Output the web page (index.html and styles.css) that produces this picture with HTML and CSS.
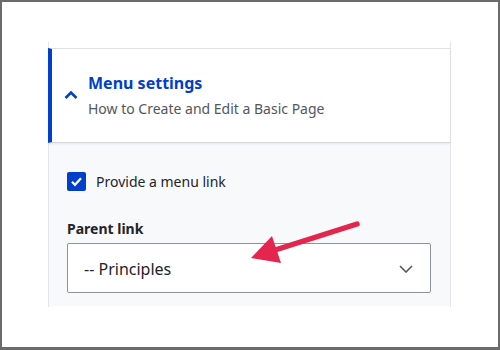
FILE: index.html
```html
<!DOCTYPE html>
<html>

<head>
	<link rel="stylesheet" href="styles.css">
</head>
<body>
<div class="frame">
	<div class="wrap">
		<div class="head">
			<svg class="toggle" width="14" height="9" viewBox="0 0 14 9">
				<polyline points="1.5,8 7,2.5 12.5,8" fill="none" stroke="#003ecc" stroke-width="2.6" />
			</svg>
			<div class="head-text">
				<div class="title">Menu settings</div>
				<div class="summary">How to Create and Edit a Basic Page</div>
			</div>
		</div>
		<div class="body">
			<div class="check-row">
				<span class="checkbox">
					<svg width="19" height="19" viewBox="0 0 19 19">
						<polyline points="5,9.8 8,12.8 14,6.3" fill="none" stroke="#fff" stroke-width="2.2" />
					</svg>
				</span>
				<span class="check-label">Provide a menu link</span>
			</div>
			<div class="field-label">Parent link</div>
			<div class="select">
				<span>-- Principles</span>
				<svg width="14" height="8" viewBox="0 0 14 8">
					<polyline points="1,1 7,7 13,1" fill="none" stroke="#55565b" stroke-width="1.6" />
				</svg>
			</div>
		</div>
	</div>
	<svg class="arrow" width="500" height="350" viewBox="0 0 500 350">
		<line x1="357" y1="224" x2="272" y2="251" stroke="#e3264d" stroke-width="5.5" stroke-linecap="round" />
		<polygon points="251,258 272,236 281,263" fill="#e3264d" />
	</svg>
</div>
</body>

</html>
```

FILE: styles.css
```css
	body {
		margin: 0;
		font-family: "Noto Sans", "Open Sans", sans-serif;
		background: #fff;
	}

	.frame {
		position: relative;
		width: 500px;
		height: 350px;
		box-sizing: border-box;
		border: 2px solid #6b6b6b;
		border-bottom-width: 3px;
		padding: 40px 0 0 46px;
		background: #fff;
	}

	.wrap {
		width: 403px;
		height: 265px;
		box-sizing: border-box;
		border-left: 1px solid #e4e5ea;
		border-right: 1px solid #e4e5ea;
		padding-top: 6px;
	}

	.head {
		display: flex;
		align-items: center;
		height: 95px;
		box-sizing: border-box;
		margin-left: -1px;
		border-top: 1px solid #e0e1e6;
		border-left: 4px solid #003ecc;
		border-bottom: 1px solid #d6d7dc;
		box-shadow: 0 1px 2px rgba(0, 0, 0, 0.08);
		padding-left: 12px;
		background: #fff;
		position: relative;
	}

	.toggle {
		margin-right: 10px;
		margin-top: -2px;
	}

	.title {
		font-size: 16px;
		line-height: 22px;
		font-weight: bold;
		color: #003ecc;
	}

	.summary {
		font-size: 14px;
		line-height: 20px;
		color: #55565b;
		margin-top: 5px;
	}

	.body {
		background: #f8f9fb;
		height: 163px;
		box-sizing: border-box;
		padding: 29px 19px 0 18px;
	}

	.check-row {
		display: flex;
		align-items: center;
		height: 19px;
	}

	.checkbox {
		width: 19px;
		height: 19px;
		border-radius: 2px;
		background: #003ecc;
		display: flex;
		margin-right: 10px;
	}

	.check-label {
		font-size: 14px;
		color: #232429;
	}

	.field-label {
		margin-top: 28px;
		font-size: 14px;
		line-height: 20px;
		font-weight: bold;
		color: #232429;
	}

	.select {
		margin-top: 4px;
		height: 50px;
		box-sizing: border-box;
		border: 1px solid #8e929c;
		border-radius: 2px;
		background: #fff;
		display: flex;
		align-items: center;
		justify-content: space-between;
		padding: 2px 17px 0 16px;
		font-size: 16px;
		color: #232429;
	}

	.arrow {
		position: absolute;
		left: -2px;
		top: -2px;
	}
```
